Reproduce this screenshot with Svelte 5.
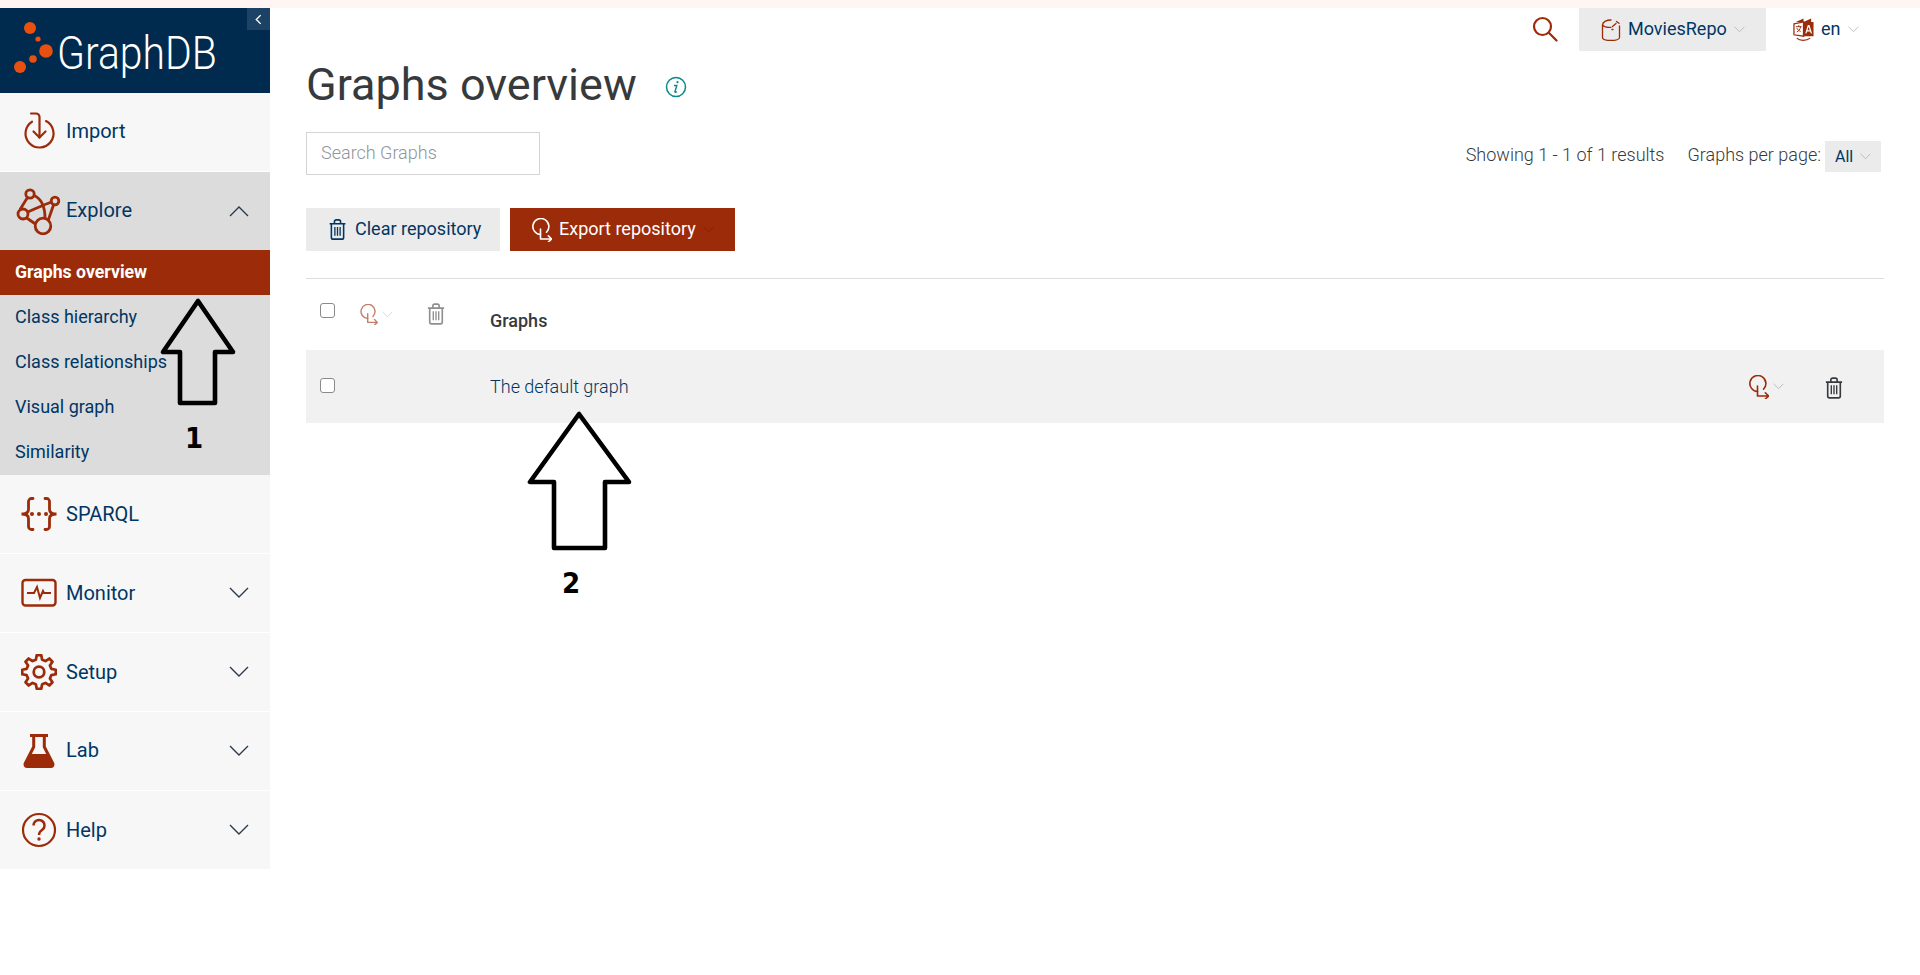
<script>
  const subs = ['Class hierarchy', 'Class relationships', 'Visual graph', 'Similarity'];
  function gearPath(cx, cy, ro, ri, n) {
    let d = '';
    const step = (Math.PI * 2) / n;
    for (let i = 0; i < n; i++) {
      const a = i * step - Math.PI / 2;
      const pts = [
        [ri, a - step * 0.32], [ro, a - step * 0.17], [ro, a + step * 0.17], [ri, a + step * 0.32]
      ];
      for (const [r, t] of pts) {
        d += (d ? 'L' : 'M') + (cx + r * Math.cos(t)).toFixed(2) + ' ' + (cy + r * Math.sin(t)).toFixed(2);
      }
    }
    return d + 'Z';
  }
  const gear = gearPath(17, 17, 16, 12, 8);
</script>

{#snippet chevron(cls)}
  <svg class={cls} viewBox="0 0 20 12" fill="none" stroke="currentColor" stroke-width="1.4"><path d="M1 1l9 9 9-9" /></svg>
{/snippet}

{#snippet trash(cls)}
  <svg class={cls} viewBox="0 0 20 24" fill="none" stroke="currentColor" stroke-width="1.8" stroke-linejoin="round">
    <path d="M1 5.5h18M3 6v15a2 2 0 0 0 2 2h10a2 2 0 0 0 2-2V6M6.5 5V3a2 2 0 0 1 2-2h3a2 2 0 0 1 2 2v2" />
    <path d="M7 9v10M10 9v10M13 9v10" stroke-width="1.5" />
  </svg>
{/snippet}

{#snippet exportIcon(cls)}
  <svg class={cls} viewBox="0 0 20 24" fill="none" stroke="currentColor" stroke-width="1.6" stroke-linecap="round" stroke-linejoin="round">
    <path d="M14.500 14.200A8 8 0 1 0 8.500 16.500" />
    <path d="M8.500 11v10h11M16.300 17.800l3.200 3.200-3.200 3" />
  </svg>
{/snippet}

<div class="strip"></div>
<div class="shell">
  <aside class="side">
    <div class="brand">
      <svg class="dots" viewBox="0 0 60 70" fill="#e8500f">
        <circle cx="30" cy="20" r="6" /><circle cx="38" cy="31" r="2.6" /><circle cx="46" cy="43" r="6.800" /><circle cx="33" cy="51" r="3.800" /><circle cx="20" cy="59" r="6" />
      </svg>
      <span class="word">GraphDB</span>
      <span class="collapse"><svg viewBox="0 0 8 12" fill="none" stroke="#fff" stroke-width="1.6"><path d="M6.500 1L1.500 6l5 5" /></svg></span>
    </div>

    <div class="item">
      <svg class="ico importico" viewBox="0 0 36 40" fill="none" stroke="currentColor" stroke-width="2.200" stroke-linecap="round">
        <path d="M11 9.700A14 14 0 1 0 25 9.100" />
        <path d="M10 1.500h5a3.500 3.500 0 0 1 3.500 3.500v20.500" /><path d="M12.500 19.500l6 6 6-6" />
      </svg>
      <span class="text">Import</span>
    </div>

    <div class="item open">
      <svg class="ico explore" viewBox="0 0 46 48" fill="none" stroke="currentColor" stroke-width="2.800">
        <circle cx="15" cy="7" r="4.200" /><circle cx="40" cy="14" r="3.800" /><circle cx="8" cy="27" r="5" /><circle cx="28" cy="39" r="7.800" />
        <path d="M12.500 10.500L5 22.500M19 8.500C27 12 30 20 30 31.300M12.700 25C21 21.500 28 18 36.500 15M38.500 18L33.300 33M11.700 31l9.500 6.500" />
      </svg>
      <span class="text">Explore</span>
      {@render chevron('chev up')}
    </div>
    <div class="sub">
      <div class="subitem active">Graphs overview</div>
      {#each subs as s}
        <div class="subitem">{s}</div>
      {/each}
    </div>

    <div class="item">
      <svg class="ico sparql" viewBox="0 0 38 34" fill="none" stroke="currentColor" stroke-width="2.800" stroke-linecap="round">
        <path d="M13 1.500h-1.500a3 3 0 0 0-3 3v8c0 2.500-2 4.500-7 4.500 5 0 7 2 7 4.500v8a3 3 0 0 0 3 3H13" />
        <path d="M25 1.500h1.500a3 3 0 0 1 3 3v8c0 2.500 2 4.500 7 4.500-5 0-7 2-7 4.500v8a3 3 0 0 1-3 3H25" />
        <circle cx="12" cy="17" r="2" fill="currentColor" stroke="none" /><circle cx="19" cy="17" r="2" fill="currentColor" stroke="none" /><circle cx="26" cy="17" r="2" fill="currentColor" stroke="none" />
      </svg>
      <span>SPARQL</span>
    </div>

    <div class="item">
      <svg class="ico" viewBox="0 0 36 30" fill="none" stroke="currentColor" stroke-width="2.400">
        <rect x="1.500" y="2" width="33" height="25.500" rx="3" />
        <path d="M6 15h7l3-6 3 11 3-7 1 2h7" stroke-width="2" />
      </svg>
      <span>Monitor</span>
      {@render chevron('chev')}
    </div>

    <div class="item">
      <svg class="ico" viewBox="0 0 34 34" fill="none" stroke="currentColor" stroke-width="2.600" stroke-linejoin="round">
        <path d={gear} /><circle cx="17" cy="17" r="5" />
      </svg>
      <span>Setup</span>
      {@render chevron('chev')}
    </div>

    <div class="item">
      <svg class="ico" viewBox="0 0 32 36" fill="currentColor">
        <path d="M7 1h18v3h-2.200v9.500L31 29.500c1.300 2.800-.2 5.500-3 5.500H4c-2.800 0-4.300-2.700-3-5.500l8.200-16V4H7zm5.200 3v10.300L8.800 21h14.400l-3.400-6.700V4z" fill-rule="evenodd" />
      </svg>
      <span class="text">Lab</span>
      {@render chevron('chev')}
    </div>

    <div class="item last">
      <svg class="ico" viewBox="0 0 36 36" fill="none" stroke="currentColor" stroke-width="2.200">
        <circle cx="18" cy="18" r="16" />
        <path d="M12.500 13.500a5.500 5.500 0 1 1 8.500 4.600c-2 1.300-3 2.400-3 4.900" stroke-width="2.400" />
        <circle cx="18" cy="27" r="1.700" fill="currentColor" stroke="none" />
      </svg>
      <span>Help</span>
      {@render chevron('chev')}
    </div>
  </aside>

  <main class="main">
    <div class="topbar">
      <svg class="search" viewBox="0 0 26 26" fill="none" stroke="currentColor" stroke-width="2.200" stroke-linecap="round">
        <circle cx="10.500" cy="10.500" r="8.500" /><path d="M16.800 16.800L24.500 24.500" />
      </svg>
      <div class="repo">
        <svg class="repoicon" viewBox="0 0 20 22" fill="none" stroke="currentColor" stroke-width="1.300" stroke-linecap="round">
          <path d="M1.500 6v12.500c0 1.800 3.800 3 8.500 3s8.500-1.200 8.500-3V7" />
          <path d="M1.500 6c0-3 4-5 8.500-5M1.500 6c1.500 1.800 5.500 2.800 8.500 2.300" />
          <path d="M11.500 7.500l3.500-3M15.500 2.500l2.500 1.800M11 10.500h1" />
        </svg>
        <span class="lift">MoviesRepo</span>
        {@render chevron('mini')}
      </div>
      <div class="lang">
        <svg class="langicon" viewBox="0 0 22 25">
          <path d="M1 6l10-2v15L1 17.500z" fill="none" stroke="#9c2b09" stroke-width="1.300" />
          <path d="M3 4l8-3.500V4zM11 4l8-3.500v3.500h2.500v15H11z" fill="#9c2b09" />
          <path d="M3 9h6M6 7.500V9M8 9c-.5 3-2 4.500-4 5.500M4 10.500c.5 1.500 2.500 3 4 3.500" fill="none" stroke="#9c2b09" stroke-width="1" />
          <path d="M13.500 16l2.500-8h.8l2.500 8M14.500 13.500h4" fill="none" stroke="#fff" stroke-width="1.300" />
          <path d="M4 21c3 3.200 10 3.200 14 0" fill="none" stroke="#9c2b09" stroke-width="1.300" />
        </svg>
        <span class="lift">en</span>
        {@render chevron('mini')}
      </div>
    </div>

    <div class="titlerow">
      <h1>Graphs overview</h1>
      <svg class="info" viewBox="0 0 22 22" fill="none" stroke="#0a8a8a" stroke-width="1.500">
        <circle cx="11" cy="11" r="9.500" />
        <path d="M9 9.500h2.800L10 15.500c-.2 .8 .4 1 1.800 .2" stroke-width="1.400" />
        <circle cx="12.500" cy="6.200" r="1.100" fill="#0a8a8a" stroke="none" />
      </svg>
    </div>

    <div class="filter">
      <input class="searchbox" placeholder="Search Graphs" />
      <div class="paging">
        <span class="showing">Showing 1 - 1 of 1 results</span>
        <span class="perpage">Graphs per page:</span>
        <span class="all">All {@render chevron('mini')}</span>
      </div>
    </div>

    <div class="actions">
      <button class="btn clear">{@render trash('btnicon')} <span class="lift">Clear repository</span></button>
      <button class="btn export">{@render exportIcon('btnicon exp')} <span class="lift">Export repository</span> {@render chevron('mini dark')}</button>
    </div>

    <div class="table">
      <div class="row head">
        <div class="tools">
          <span class="check"></span>
          <span class="rowexport faded">{@render exportIcon('expico')}{@render chevron('mini')}</span>
          <span class="faded2">{@render trash('trashico')}</span>
        </div>
        <div class="name">Graphs</div>
      </div>
      <div class="row body">
        <div class="tools"><span class="check"></span></div>
        <div class="name link">The default graph</div>
        <div class="rowactions">
          <span class="rowexport">{@render exportIcon('expico big')}{@render chevron('mini')}</span>
          <span class="trashdark">{@render trash('trashico')}</span>
        </div>
      </div>
    </div>
  </main>
</div>

<svg class="annot one" viewBox="0 0 76 108" fill="none" stroke="#000" stroke-width="4.600" stroke-linejoin="round">
  <path d="M38 3L3 54h17v51h35V54h18z" />
</svg>
<span class="num n1">1</span>
<svg class="annot two" viewBox="0 0 105 140" fill="none" stroke="#000" stroke-width="4.600" stroke-linejoin="round">
  <path d="M52 3L3 71h24v66h51V71h24z" />
</svg>
<span class="num n2">2</span>

<style>
  :global(body) { margin: 0; background: #fff; font-family: Roboto, "Liberation Sans", sans-serif; }
  .strip { height: 8px; background: #fff6f3; }
  .shell { display: flex; align-items: flex-start; }
  .side { width: 270px; flex: none; }
  .brand { height: 85px; background: #002b4e; position: relative; display: flex; align-items: flex-start; overflow: hidden; }
  .dots { position: absolute; left: 0; top: 0; width: 60px; height: 70px; }
  .word { color: #fff; font-weight: 300; font-size: 47px; line-height: 1; margin: 21px 0 0 57px; transform: scaleX(.87); transform-origin: left top; white-space: nowrap; }
  .collapse { position: absolute; right: 0; top: 0; width: 23px; height: 22px; background: #1c4265; display: flex; align-items: center; justify-content: center; }
  .collapse svg { width: 7px; height: 11px; }
  .item { height: 79px; box-sizing: border-box; border-bottom: 1px solid #fff; background: #f7f7f7; display: flex; align-items: center; color: #003663; font-size: 20px; padding: 0 0 1px 66px; position: relative; }
  .item.open { background: #dcdcdc; height: 78px; border-bottom: 0; }
  .item.last { height: 78px; border-bottom: 0; }
  .text { padding-bottom: 2px; }
  .ico { position: absolute; left: 21px; top: 50%; transform: translateY(-50%); width: 36px; height: 36px; color: #9c2b09; }
  .ico.explore { left: 15px; width: 46px; height: 48px; }
  .ico.importico { height: 40px; }
  .ico.sparql { left: 20px; width: 38px; height: 34px; }
  .chev { position: absolute; left: 229px; top: 50%; transform: translateY(-50%); width: 20px; height: 12px; color: #2b3a4a; }
  .chev.up { transform: translateY(-50%) rotate(180deg); }
  .sub { background: #dcdcdc; }
  .subitem { height: 45px; box-sizing: border-box; display: flex; align-items: center; padding: 0 0 2px 15px; color: #003663; font-size: 18px; }
  .subitem.active { background: #9c2b09; color: #fff; font-weight: 700; font-size: 17.700px; }

  .main { flex: 1; min-width: 0; padding: 0 36px; box-sizing: border-box; }
  .topbar { height: 43px; display: flex; justify-content: flex-end; align-items: flex-start; color: #003663; font-size: 18px; }
  .lift { padding-bottom: 2px; }
  .search { width: 26px; height: 26px; color: #9c2b09; margin: 8px 21px 0 0; }
  .repo { width: 187px; height: 43px; background: #ebebeb; display: flex; align-items: center; padding-left: 22px; box-sizing: border-box; }
  .repoicon { width: 20px; height: 22px; color: #9c2b09; margin-right: 7px; }
  .mini { width: 11px; height: 7px; color: #a9aeb3; margin-left: 7px; }
  .mini.dark { color: #6f1f06; }
  .lang { display: flex; align-items: center; height: 43px; margin-left: 27px; width: 91px; }
  .langicon { width: 21px; height: 24px; margin-right: 7px; }

  .titlerow { display: flex; align-items: center; height: 64px; margin-top: 2px; margin-bottom: -1px; }
  h1 { margin: 0; font-size: 45px; font-weight: 400; color: #373a3c; line-height: 64px; }
  .info { width: 22px; height: 22px; margin: 4px 0 0 28px; }

  .filter { display: flex; justify-content: space-between; align-items: flex-start; margin-top: 16px; }
  .searchbox { width: 234px; height: 43px; box-sizing: border-box; border: 1px solid #d5d5d5; padding: 0 14px 2px; font: 300 18px Roboto, sans-serif; outline: 0; }
  .searchbox::placeholder { color: #8f959a; opacity: 1; }
  .paging { display: flex; align-items: center; height: 31px; margin: 9px 3px 0 0; font-size: 18px; font-weight: 300; color: #373a3c; }
  .showing, .perpage { padding-bottom: 4px; }
  .perpage { margin-left: 23px; }
  .all { margin-left: 4px; width: 56px; height: 31px; box-sizing: border-box; background: #ebebeb; display: flex; align-items: center; padding-left: 10px; color: #003663; font-weight: 400; font-size: 16px; }

  .actions { display: flex; gap: 10px; margin-top: 33px; }
  .btn { height: 43px; border: 0; padding: 0; font: 400 18px Roboto, sans-serif; display: flex; align-items: center; }
  .clear { width: 194px; background: #ebebeb; color: #003663; padding-left: 22px; }
  .export { width: 225px; background: #9c2b09; color: #fff; padding-left: 22px; }
  .btnicon { width: 19px; height: 21px; margin-right: 8px; }
  .exp { width: 20px; height: 24px; margin-right: 7px; }

  .table { margin-top: 27px; border-top: 1px solid #dedede; }
  .row { display: flex; }
  .head { height: 71px; }
  .body { height: 73px; background: #f1f1f1; align-items: center; }
  .tools { width: 184px; flex: none; display: flex; align-items: flex-start; padding: 24px 0 0 14px; box-sizing: border-box; }
  .body .tools { padding-top: 0; margin-top: -2px; }
  .check { width: 15px; height: 15px; box-sizing: border-box; border: 1px solid #8a8a8a; border-radius: 3px; background: #fff; flex: none; }
  .faded { opacity: .6; }
  .rowexport { display: flex; align-items: center; color: #9c2b09; }
  .rowexport .mini { margin-left: 4px; }
  .expico { width: 18px; height: 21px; }
  .expico.big { width: 20px; height: 24px; }
  .head .rowexport { margin: 1px 0 0 25px; }
  .faded2 { color: #8f8f8f; margin: 0 0 0 34px; }
  .trashico { width: 18px; height: 22px; display: block; }
  .name { font-size: 18px; font-weight: 500; color: #373a3c; padding-top: 31px; }
  .body .name { padding-top: 0; font-weight: 300; color: #003663; flex: 1; }
  .rowactions { display: flex; align-items: center; margin-right: 41px; }
  .trashdark { color: #373a3c; margin: 2px 0 0 41px; }

  .annot { position: absolute; overflow: visible; }
  .one { left: 160px; top: 298px; width: 76px; height: 108px; }
  .two { left: 527px; top: 411px; width: 105px; height: 140px; }
  .num { position: absolute; font: 700 29px "DejaVu Sans Condensed", "DejaVu Sans", sans-serif; color: #000; line-height: 1; }
  .n1 { left: 185px; top: 424px; }
  .n2 { left: 562px; top: 569px; }
</style>
